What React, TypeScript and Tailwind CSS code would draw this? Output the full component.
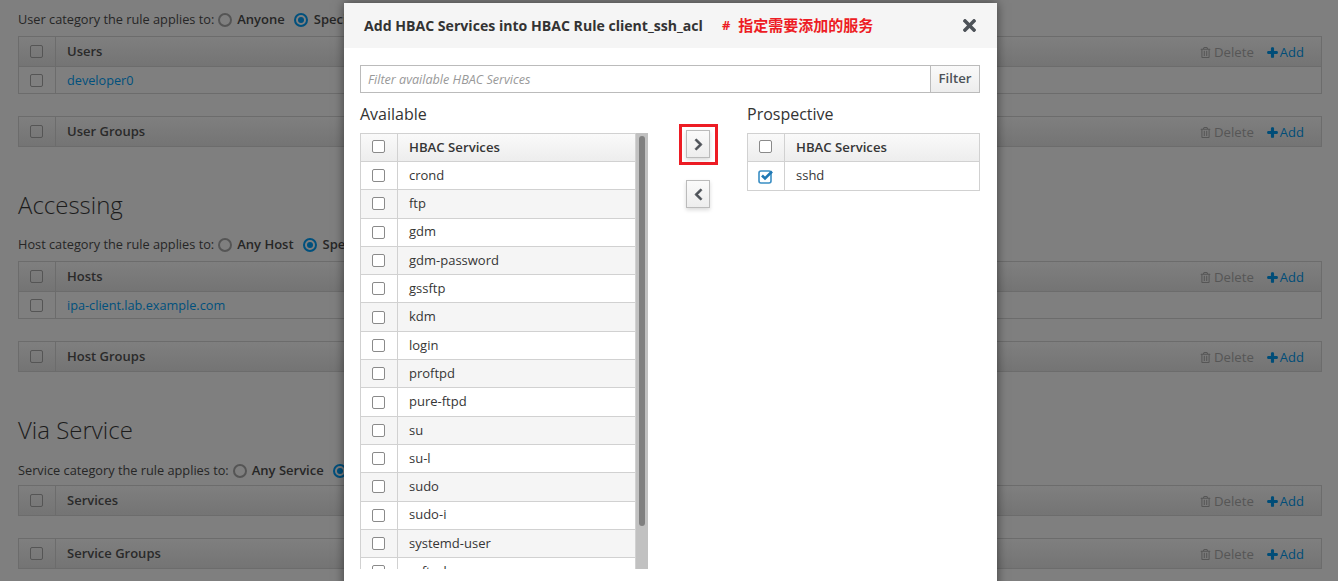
import { FaChevronLeft, FaChevronRight, FaPlus, FaRegTrashAlt, FaTimes } from 'react-icons/fa';

const services = ['crond', 'ftp', 'gdm', 'gdm-password', 'gssftp', 'kdm', 'login', 'proftpd', 'pure-ftpd', 'su', 'su-l', 'sudo', 'sudo-i', 'systemd-user', 'vsftpd'];

function Box({ dark }: { dark?: boolean }) {
  return <span className={`block w-[13px] h-[13px] rounded-[2px] border-[1.5px] ${dark ? 'border-[#555] bg-transparent' : 'border-[#8a8a8a] bg-white'}`} />;
}

function CheckedBox() {
  return (
    <svg width="16" height="15" viewBox="0 0 16 15" className="block">
      <rect x="1" y="2" width="12" height="12" rx="2" fill="none" stroke="#3a8ec4" strokeWidth="1.6" />
      <path d="M4 6.5l3 3 7-7" fill="none" stroke="#1f78b4" strokeWidth="2.6" />
    </svg>
  );
}

function PageTable({ title, rows = [] }: { title: string; rows?: string[] }) {
  return (
    <div className="border border-[#6c6c6c]">
      <div className="flex items-center h-[29px] bg-gradient-to-b from-[#7f7f7f] to-[#747474]">
        <div className="w-[37px] h-full flex items-center justify-center pr-[1px] border-r border-[#6c6c6c]"><Box dark /></div>
        <div className="flex-1 pl-[11px] pt-[1px] font-semibold text-[13px] text-[#2a2a2a]">{title}</div>
        <div className="flex items-center gap-[3px] pt-[2px] text-[13.2px] text-[#565656] mr-[13px]"><FaRegTrashAlt size={11} />Delete</div>
        <div className="flex items-center gap-[2px] pt-[2px] text-[13px] text-[#004d78] mr-[17px]"><FaPlus size={11} stroke="currentColor" strokeWidth={50} />Add</div>
      </div>
      {rows.map(r => (
        <div key={r} className="flex items-center h-[27px] border-t border-[#6c6c6c]">
          <div className="w-[37px] h-full flex items-center justify-center pr-[1px] border-r border-[#6c6c6c]"><Box dark /></div>
          <div className="pl-[11px] pt-[1px] text-[12.7px] text-[#00507d]">{r}</div>
        </div>
      ))}
    </div>
  );
}

function Category({ label, first, second }: { label: string; first: string; second: string }) {
  return (
    <div className="flex items-center h-[18px] text-[#262626]">
      <span className="text-[12.75px]">{label}</span>
      <span className="ml-[4px] w-[14px] h-[14px] rounded-full border-2 border-[#555]" />
      <span className="ml-[5px] text-[13px] font-semibold">{first}</span>
      <span className="ml-[9px] w-[14px] h-[14px] rounded-full border-2 border-[#00507d] flex items-center justify-center"><span className="w-[6px] h-[6px] rounded-full bg-[#00507d]" /></span>
      <span className="ml-[6px] text-[13px] font-semibold">{second}</span>
    </div>
  );
}

function ServiceHeader() {
  return (
    <div className="flex h-[28px] border-b border-[#d1d1d1] bg-gradient-to-b from-[#fafafa] to-[#ededed] text-[13.2px] font-semibold text-[#363636]">
      <div className="w-[37px] shrink-0 flex items-center justify-center pr-[1px] pb-[2px] border-r border-[#d1d1d1]"><Box /></div>
      <div className="pl-[11px] flex items-center">HBAC Services</div>
    </div>
  );
}

function MoveButton({ left }: { left?: boolean }) {
  return (
    <button className="w-[24px] h-[28px] flex items-center justify-center border border-[#bbb] bg-gradient-to-b from-[#fafafa] to-[#ededed] text-[#4d5258] shadow-[0_2px_4px_rgba(0,0,0,0.15)]">
      {left
        ? <FaChevronLeft size={13} stroke="currentColor" strokeWidth={30} />
        : <FaChevronRight size={13} stroke="currentColor" strokeWidth={30} />}
    </button>
  );
}

export default function App() {
  return (
    <div className="relative h-[581px] w-[1338px] overflow-hidden bg-[#7f7f7f] font-['Open_Sans','Noto_Sans_CJK_SC',sans-serif]">
      {/* Page behind the dialog */}
      <div className="pl-[18px] pr-[16px] pt-[11px]">
        <Category label="User category the rule applies to:" first="Anyone" second="Specified" />
        <div className="mt-[7px]"><PageTable title="Users" rows={['developer0']} /></div>
        <div className="mt-[22px]"><PageTable title="User Groups" /></div>
        <h2 className="mt-[41px] h-[33px] text-[24px] leading-[33px] font-light text-[#1c1c1c]">Accessing</h2>
        <div className="mt-[15px]"><Category label="Host category the rule applies to:" first="Any Host" second="Specified" /></div>
        <div className="mt-[7px]"><PageTable title="Hosts" rows={['ipa-client.lab.example.com']} /></div>
        <div className="mt-[22px]"><PageTable title="Host Groups" /></div>
        <h2 className="mt-[41px] h-[33px] text-[24px] leading-[33px] font-light text-[#1c1c1c]">Via Service</h2>
        <div className="mt-[16px]"><Category label="Service category the rule applies to:" first="Any Service" second="Specified" /></div>
        <div className="mt-[5px]"><PageTable title="Services" /></div>
        <div className="mt-[22px]"><PageTable title="Service Groups" /></div>
      </div>

      {/* Dialog */}
      <div className="absolute left-[344px] top-[3px] w-[653px] h-[640px] bg-white shadow-[0_0_10px_rgba(0,0,0,0.5)]">
        <div className="flex items-center h-[45px] bg-[#f5f5f5] pl-[20px] pr-[18px]">
          <span className="font-bold text-[14.1px] text-[#333]">Add HBAC Services into HBAC Rule client_ssh_acl</span>
          <span className="ml-[19px] font-bold text-[13px] text-[#ed1c24]">#</span>
          <span className="ml-[8px] font-bold text-[15px] text-[#ed1c24]">指定需要添加的服务</span>
          <FaTimes size={19} className="ml-auto text-[#4d5258]" />
        </div>
        <div className="pl-[16px] pr-[17px] pt-[17px]">
          <div className="flex h-[28px] border border-[#bbb]">
            <div className="flex-1 pl-[7px] pt-[2px] flex items-center italic text-[12.6px] text-[#999]">Filter available HBAC Services</div>
            <div className="w-[49px] flex items-center justify-center border-l border-[#bbb] bg-gradient-to-b from-[#fafafa] to-[#ededed] text-[13.2px] font-semibold text-[#4d5258]">Filter</div>
          </div>
          <div className="flex mt-[9px]">
            <div className="w-[288px] shrink-0">
              <div className="pt-[1px] h-[23px] text-[16px] leading-[22px] text-[#333]">Available</div>
              <div className="relative mt-[8px] h-[436px] overflow-hidden pr-[12px]">
                <div className="border border-[#d1d1d1] border-b-0">
                  <ServiceHeader />
                  {services.map((s, i) => (
                    <div key={s} className={`flex h-[28.3px] border-b border-[#d1d1d1] text-[13px] text-[#363636] ${i % 2 ? 'bg-[#f5f5f5]' : 'bg-white'}`}>
                      <div className="w-[37px] shrink-0 flex items-center justify-center pr-[1px] border-r border-[#d1d1d1]"><Box /></div>
                      <div className="pl-[11px] flex items-center">{s}</div>
                    </div>
                  ))}
                </div>
                <div className="absolute right-0 top-0 bottom-0 w-[12px] bg-[#c1c1c1]">
                  <div className="mx-auto mt-[3px] w-[6px] h-[390px] rounded-[3px] bg-[#808080]" />
                </div>
              </div>
            </div>
            <div className="w-[99px] shrink-0 flex flex-col items-start pl-[31px] pt-[22px]">
              <div className="pt-[3px] pb-[4px] pl-[4px] pr-[5px] border-[3px] border-[#ed1c24]"><MoveButton /></div>
              <div className="mt-[15px] ml-[7px]"><MoveButton left /></div>
            </div>
            <div className="flex-1">
              <div className="pt-[1px] h-[23px] text-[16px] leading-[22px] text-[#333]">Prospective</div>
              <div className="mt-[8px] border border-[#d1d1d1]">
                <ServiceHeader />
                <div className="flex h-[28px] text-[13px] text-[#363636]">
                  <div className="w-[37px] shrink-0 flex items-center justify-center pr-[1px] border-r border-[#d1d1d1]"><CheckedBox /></div>
                  <div className="pl-[11px] flex items-center">sshd</div>
                </div>
              </div>
            </div>
          </div>
        </div>
      </div>
    </div>
  );
}
